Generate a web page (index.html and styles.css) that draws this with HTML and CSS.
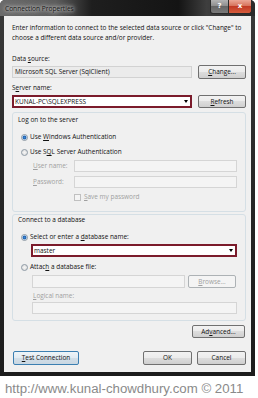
FILE: index.html
```html
<!DOCTYPE html>
<html lang="en">
  <head>
    <meta charset="UTF-8" />
    <title>Connection Properties</title>
    <link rel="stylesheet" href="styles.css">
  </head>
  <body>
    <div class="window">
      <div class="titlebar">
        <span class="title">Connection Properties</span>
        <div class="caption-btns">
          <span class="cap-help">?</span>
          <span class="cap-close">x</span>
        </div>
      </div>

      <div class="client">
        <p class="intro">Enter information to connect to the selected data source or click "Change" to choose a different data source and/or provider.</p>

        <div class="label first">Data <u>s</u>ource:</div>
        <div class="row">
          <div class="textbox readonly wide">Microsoft SQL Server (SqlClient)</div>
          <button class="btn side"><u>C</u>hange...</button>
        </div>

        <div class="label">S<u>e</u>rver name:</div>
        <div class="row">
          <div class="combo wide"><span>KUNAL-PC\SQLEXPRESS</span><span class="arrow"></span></div>
          <button class="btn side tall"><u>R</u>efresh</button>
        </div>

        <div class="group logon">
          <div class="group-title">Log on to the server</div>
          <div class="option first-opt"><span class="radio checked"></span><span>Use <u>W</u>indows Authentication</span></div>
          <div class="option"><span class="radio"></span><span>Use S<u>Q</u>L Server Authentication</span></div>
          <div class="field user">
            <span class="field-label"><u>U</u>ser name:</span>
            <div class="textbox disabled"></div>
          </div>
          <div class="field pass">
            <span class="field-label"><u>P</u>assword:</span>
            <div class="textbox disabled"></div>
          </div>
          <div class="check"><span class="checkbox"></span><span><u>S</u>ave my password</span></div>
        </div>

        <div class="group database">
          <div class="group-title">Connect to a database</div>
          <div class="option first-opt"><span class="radio checked"></span><span>Select or enter a <u>d</u>atabase name:</span></div>
          <div class="combo db"><span>master</span><span class="arrow"></span></div>
          <div class="option attach"><span class="radio"></span><span>Attac<u>h</u> a database file:</span></div>
          <div class="file-row">
            <div class="textbox disabled file"></div>
            <button class="btn disabled-btn browse"><u>B</u>rowse...</button>
          </div>
          <div class="sub-label"><u>L</u>ogical name:</div>
          <div class="textbox disabled logical"></div>
        </div>

        <div class="advanced-row">
          <button class="btn advanced">Ad<u>v</u>anced...</button>
        </div>

        <div class="footer">
          <button class="btn default test"><u>T</u>est Connection</button>
          <button class="btn ok">OK</button>
          <button class="btn cancel">Cancel</button>
        </div>
      </div>
    </div>

    <p class="credit">http://www.kunal-chowdhury.com &copy; 2011</p>
  </body>
</html>
```

FILE: styles.css
```css
body {
    margin: 0;
    background-color: #fff;
    font-family: "Open Sans", "Noto Sans", sans-serif;
}
.window {
    width: 255px;
    height: 376px;
    box-sizing: border-box;
    padding: 0 4px 4px 4px;
    background: linear-gradient(to bottom, #3a3a3a, #242424 60%, #1c1c1c);
    border-radius: 5px 5px 0 0;
    display: flex;
    flex-direction: column;
}
.titlebar {
    height: 17px;
    margin: 0 -4px;
    padding: 0 3px 0 4px;
    display: flex;
    align-items: flex-start;
    border-radius: 5px 5px 0 0;
    background: linear-gradient(to right, #6a6a6a 0, #5c5c5c 22%, #1e1e1e 36%, #141414 70%, #3e3e3e 81%, #2a2a2a 100%);
}
.title {
    font-size: 6.6px;
    line-height: 9px;
    margin-top: 4px;
    margin-left: 1px;
    color: #151515;
    text-shadow: 0 0 3px #d8d8d8, 0 0 5px #c8c8c8, 0 0 7px #bbb;
}
.caption-btns {
    margin-left: auto;
    display: flex;
}
.cap-help,
.cap-close {
    height: 13px;
    line-height: 12px;
    text-align: center;
    color: #fff;
    font-family: "DejaVu Sans", sans-serif;
    font-weight: bold;
    font-size: 7px;
    border: 1px solid #2a2a2a;
    border-top: none;
}
.cap-help {
    width: 17px;
    border-radius: 0 0 0 3px;
    background: linear-gradient(to bottom, #b3b3b3, #8a8a8a 50%, #666 50%, #7a7a7a);
}
.cap-close {
    width: 22px;
    border-left: none;
    border-radius: 0 0 3px 0;
    background: linear-gradient(to bottom, #eba796, #d46d55 50%, #c23a24 50%, #d65c3c);
}
.client {
    flex: 1;
    background-color: #f0f0f0;
    padding: 7px 5px 7px 8px;
    font-size: 6.45px;
    line-height: 10px;
    color: #111;
}
.intro {
    margin: 0;
}
.label {
    margin-top: 4px;
}
.label.first {
    margin-top: 11px;
}
.row {
    display: flex;
    align-items: center;
    justify-content: space-between;
    margin-top: 1px;
    height: 14px;
}
.textbox {
    box-sizing: border-box;
    height: 12px;
    border: 1px solid #abadb3;
    background-color: #fff;
    padding-left: 2px;
    line-height: 10px;
}
.textbox.readonly {
    background-color: #ebebeb;
    border-color: #d2d2d2;
}
.textbox.disabled {
    background-color: #f4f4f4;
    border-color: #d5d5d5;
}
.wide {
    width: 180px;
}
.combo {
    box-sizing: border-box;
    height: 13px;
    border: 2px solid #7b1b2b;
    background-color: #fff;
    padding-left: 1px;
    line-height: 9px;
    display: flex;
    align-items: center;
    justify-content: space-between;
}
.arrow {
    width: 0;
    height: 0;
    margin-right: 2px;
    border-left: 2.5px solid transparent;
    border-right: 2.5px solid transparent;
    border-top: 3px solid #000;
}
.btn {
    box-sizing: border-box;
    height: 14px;
    padding: 0;
    font-family: inherit;
    font-size: 6.45px;
    line-height: 12px;
    color: #111;
    border: 1px solid #707070;
    border-radius: 2px;
    background: linear-gradient(to bottom, #f2f2f2, #ebebeb 50%, #dddddd 50%, #cfcfcf);
}
.btn.side {
    width: 48px;
}
.btn.tall {
    height: 13px;
    line-height: 11px;
}
.group {
    border: 1px solid #d5dfe5;
    border-radius: 3px;
    padding-left: 5px;
    padding-right: 7px;
}
.logon {
    margin-top: 4px;
    padding-top: 2px;
    padding-bottom: 9px;
}
.database {
    margin-top: 2px;
    padding-top: 0;
    padding-bottom: 6px;
}
.option {
    display: flex;
    align-items: center;
    margin-top: 5px;
    padding-left: 3px;
}
.option.first-opt {
    margin-top: 7px;
}
.radio {
    width: 7px;
    height: 7px;
    box-sizing: border-box;
    border-radius: 50%;
    border: 1px solid #8e9aa5;
    background: radial-gradient(circle, #f6f6f6, #d8d8d8);
    margin-right: 2px;
}
.radio.checked {
    background: radial-gradient(circle, #3d8ad6 0, #1f5fae 1.6px, #c6dcf1 2.2px, #eef3f8);
}
.field {
    display: flex;
    align-items: center;
    height: 12px;
    margin-top: 4px;
    color: #a0a0a0;
}
.field.user {
    margin-top: 3px;
}
.field-label {
    padding-left: 15px;
    box-sizing: border-box;
    width: 56px;
}
.field .textbox {
    width: 163px;
}
.check {
    display: flex;
    align-items: center;
    margin-top: 4px;
    padding-left: 56px;
    color: #a0a0a0;
}
.checkbox {
    width: 7px;
    height: 7px;
    box-sizing: border-box;
    border: 1px solid #c0c0c0;
    background-color: #f4f4f4;
    margin-right: 3px;
}
.combo.db {
    margin-top: 2px;
    margin-left: 13px;
    margin-right: 1px;
}
.option.attach {
    margin-top: 5px;
}
.file-row {
    display: flex;
    align-items: center;
    justify-content: space-between;
    height: 13px;
    margin-top: 3px;
    margin-left: 14px;
    margin-right: 2px;
}
.textbox.file {
    width: 153px;
    height: 13px;
}
.btn.disabled-btn {
    color: #a0a0a0;
    border-color: #adb2b5;
    background: #f4f4f4;
}
.btn.browse {
    width: 48px;
    height: 13px;
    line-height: 11px;
}
.sub-label {
    margin-top: 3px;
    padding-left: 15px;
    color: #a0a0a0;
}
.textbox.logical {
    margin-top: 1px;
    margin-left: 14px;
    margin-right: 1px;
}
.advanced-row {
    display: flex;
    justify-content: flex-end;
    margin-top: 4px;
}
.btn.advanced {
    width: 53px;
    height: 13px;
    line-height: 11px;
    margin-right: 1px;
}
.footer {
    display: flex;
    margin-top: 13px;
}
.btn.test {
    width: 66px;
    margin-left: 1px;
}
.btn.default {
    border-color: #3c7fb1;
    background: linear-gradient(to bottom, #eef4f8, #e2ebf2 50%, #d3dfe8 50%, #c9d7e2);
}
.btn.ok {
    width: 49px;
    margin-left: auto;
}
.btn.cancel {
    width: 49px;
    margin-left: 5px;
}
.credit {
    margin: 5px 0 0 5px;
    font-family: "Liberation Sans", Arial, sans-serif;
    font-size: 13.25px;
    line-height: 15px;
    color: #8a8a8a;
}
```
